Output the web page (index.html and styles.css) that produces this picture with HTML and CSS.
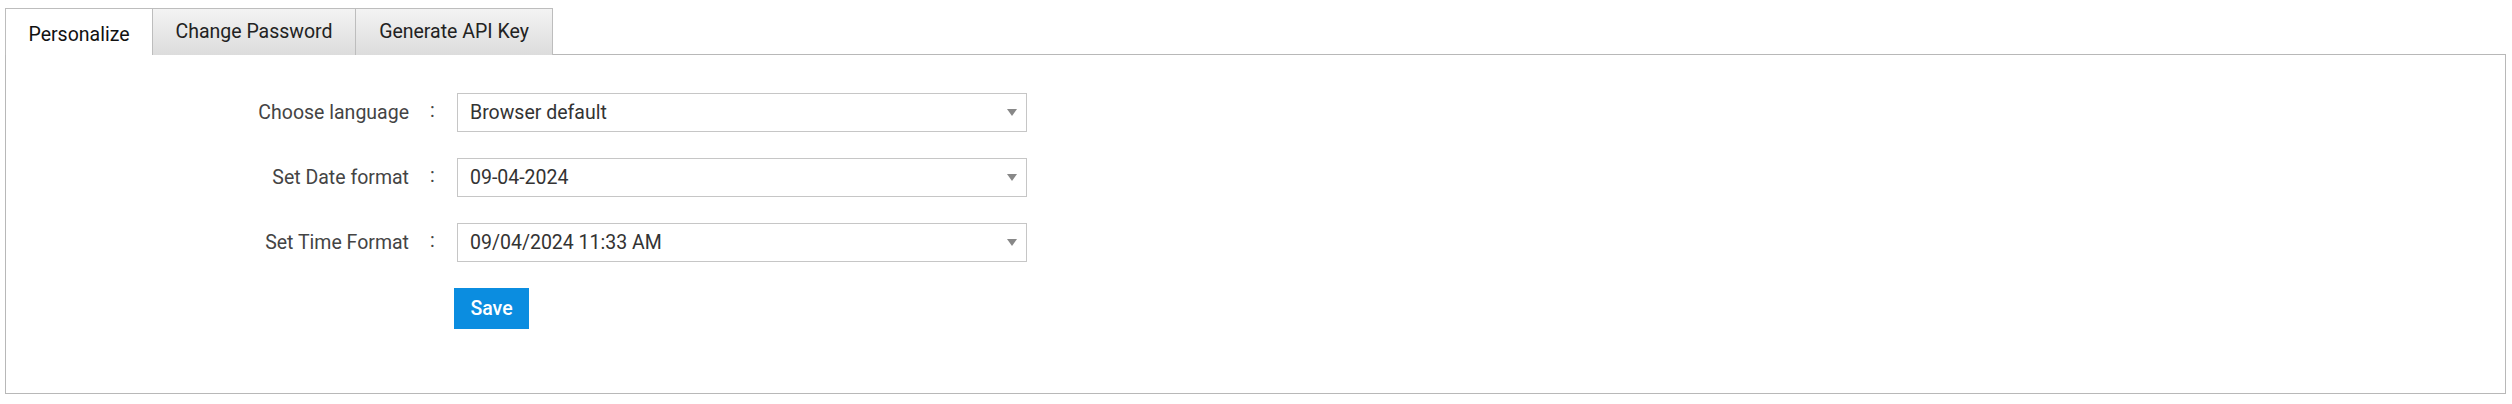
FILE: index.html
```html
<!DOCTYPE html>
<html>
<head>
<meta charset="utf-8">
<link rel="stylesheet" href="styles.css">
</head>
<body>
<div class="page">
  <div class="tabs">
    <div class="tab active">Personalize</div>
    <div class="tab">Change Password</div>
    <div class="tab">Generate API Key</div>
  </div>
  <div class="panel">
    <div class="form">
      <div class="label">Choose language</div>
      <div class="colon">:</div>
      <div class="select"><span class="value">Browser default</span><span class="arrow"></span></div>

      <div class="label">Set Date format</div>
      <div class="colon">:</div>
      <div class="select"><span class="value">09-04-2024</span><span class="arrow"></span></div>

      <div class="label">Set Time Format</div>
      <div class="colon">:</div>
      <div class="select"><span class="value">09/04/2024 11:33 AM</span><span class="arrow"></span></div>

      <div class="spacer"></div>
      <div class="spacer"></div>
      <div class="actions"><button class="save">Save</button></div>
    </div>
  </div>
</div>
</body>
</html>
```
FILE: styles.css
```css
html, body {
  margin: 0;
  padding: 0;
  background: #ffffff;
}
body {
  font-family: Roboto, "Liberation Sans", Arial, sans-serif;
  font-size: 19.5px;
  color: #333;
}
.page {
  padding: 8px 6px 0 5px;
}
.tabs {
  display: flex;
  align-items: flex-end;
}
.tab {
  box-sizing: border-box;
  height: 47px;
  padding: 0 23px;
  display: flex;
  align-items: center;
  border: 1px solid #bdbdbd;
  border-bottom: none;
  border-left: none;
  background: linear-gradient(#f3f3f3, #dcdcdc);
  color: #222;
  margin-bottom: -1px;
  position: relative;
  z-index: 1;
  padding-bottom: 2px;
}
.tab:first-child {
  border-left: 1px solid #bdbdbd;
}
.tab.active {
  background: #ffffff;
  color: #111;
  padding: 0 22px 0 22px;
}
.tab:nth-child(2) { width: 203px; justify-content: center; padding: 0 0 2px 0; }
.tab:nth-child(3) { width: 197px; justify-content: center; padding: 0 0 2px 0; }
.tab.active { width: 148px; justify-content: center; padding: 4px 0 0 0; }
.panel {
  box-sizing: border-box;
  height: 340px;
  border: 1px solid #b8b8b8;
  background: #fff;
}
.form {
  display: grid;
  grid-template-columns: 403px 48px 570px;
  grid-auto-rows: 38px;
  row-gap: 27px;
  padding-top: 38px;
  align-items: center;
}
.form .spacer + .spacer + .actions,
.actions {
  margin-top: 0;
}
.label {
  text-align: right;
  color: #444;
}
.colon {
  padding-left: 21px;
  color: #444;
  padding-bottom: 3px;
}
.select {
  box-sizing: border-box;
  height: 39px;
  border: 1px solid #c6c6c6;
  display: flex;
  align-items: center;
  justify-content: space-between;
  padding: 0 9px 0 12px;
  color: #333;
  background: #fff;
}
.arrow {
  width: 0;
  height: 0;
  border-left: 5px solid transparent;
  border-right: 5px solid transparent;
  border-top: 7px solid #888;
}
.actions {
  align-self: start;
  margin-left: -3px;
  margin-top: -1px;
}
.save {
  box-sizing: border-box;
  width: 75px;
  height: 41px;
  border: none;
  background: #0b8de0;
  color: #fff;
  font-family: Roboto, "Liberation Sans", Arial, sans-serif;
  font-size: 19.5px;
  font-weight: 500;
  padding: 0;
  cursor: pointer;
}
```
